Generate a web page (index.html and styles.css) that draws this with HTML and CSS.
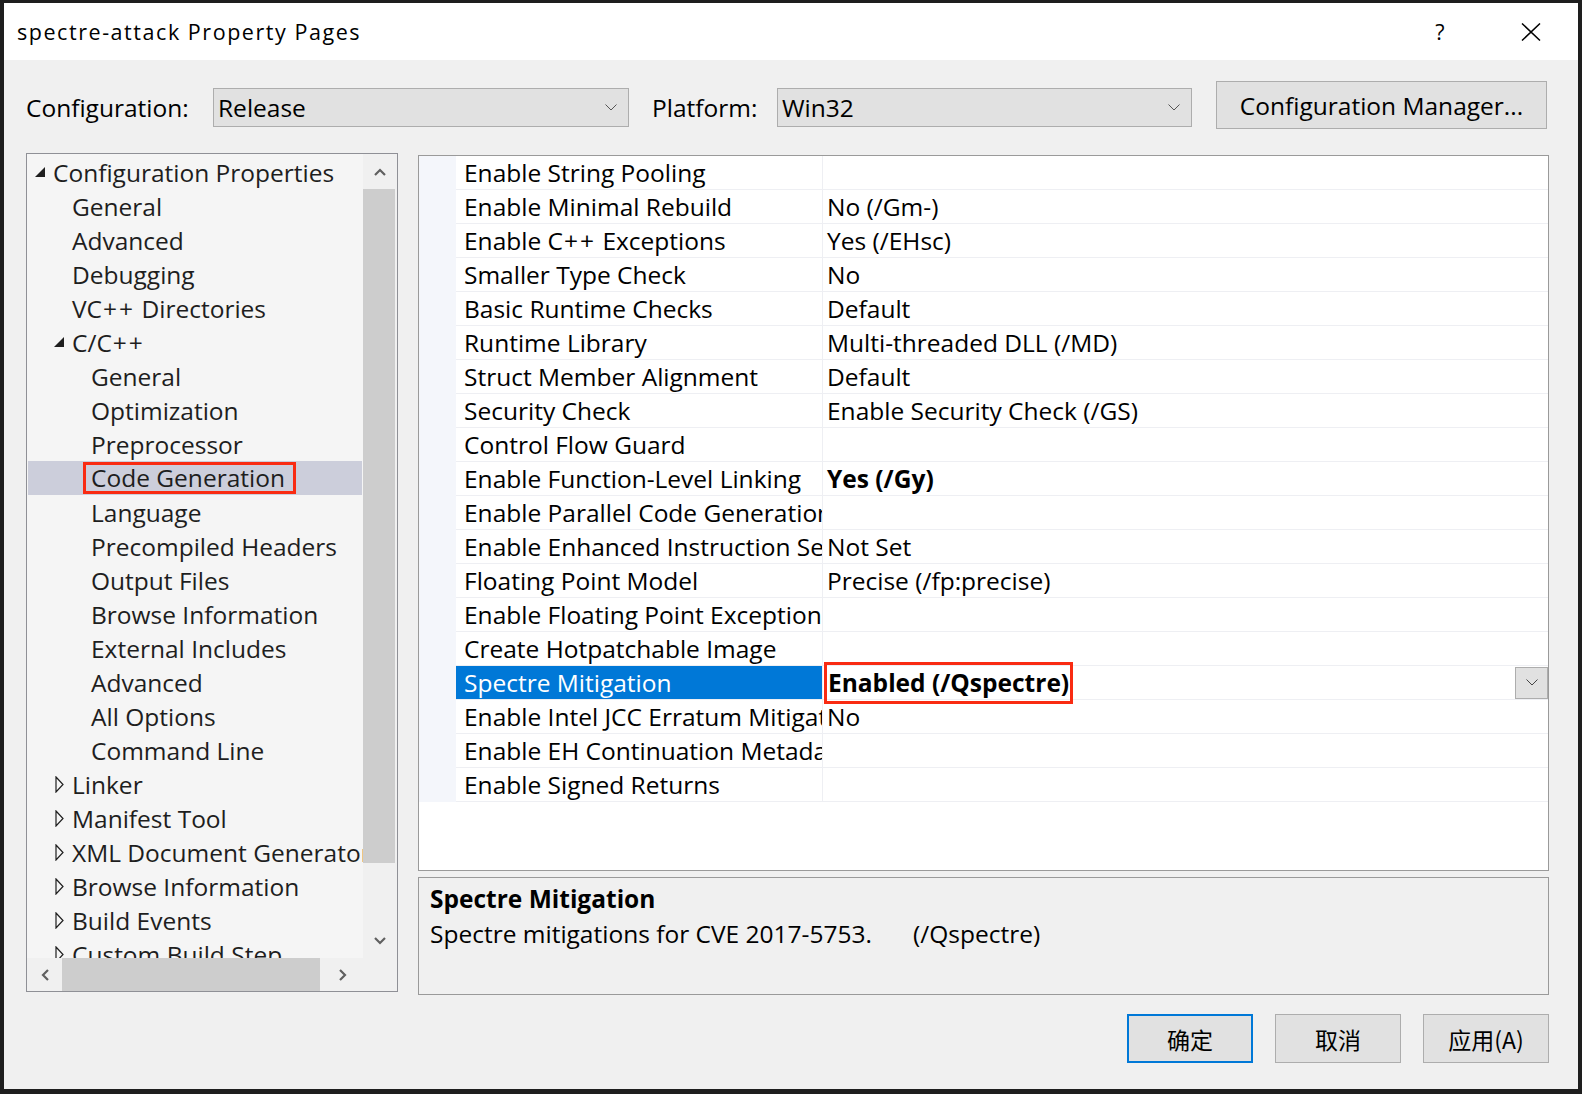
FILE: index.html
```html
<!DOCTYPE html>
<html>
<head>
<meta charset="utf-8">
<title>spectre-attack Property Pages</title>
<link rel="stylesheet" href="styles.css">
</head>
<body>
<div class="dialog">
  <div class="titlebar">
    <span class="title">spectre-attack Property Pages</span>
    <span class="help">?</span>
    <svg class="close" width="20" height="18" viewBox="0 0 20 18"><path d="M1 0.5 L19 17.5 M19 0.5 L1 17.5" stroke="#000" stroke-width="1.5" fill="none"/></svg>
  </div>
  <div class="content">
    <div class="config-row">
      <span class="lbl lbl-config">Configuration:</span>
      <div class="combo combo-config"><span>Release</span><svg class="chev" width="12" height="7" viewBox="0 0 12 7"><path d="M0.5 0.5 L6 6 L11.5 0.5" stroke="#555" stroke-width="1" fill="none"/></svg></div>
      <span class="lbl lbl-platform">Platform:</span>
      <div class="combo combo-platform"><span>Win32</span><svg class="chev" width="12" height="7" viewBox="0 0 12 7"><path d="M0.5 0.5 L6 6 L11.5 0.5" stroke="#555" stroke-width="1" fill="none"/></svg></div>
      <button class="btn btn-cfgmgr">Configuration Manager...</button>
    </div>
    <div class="main">
      <div class="tree">
        <div class="tree-body">
          <div class="tree-rows">
            <div class="node l0"><span class="tg"><svg width="10" height="10" viewBox="0 0 10 10"><path d="M10 0 L10 10 L0 10 Z" fill="#1e1e1e"/></svg></span><span>Configuration Properties</span></div>
            <div class="node l1"><span class="tg"></span><span>General</span></div>
            <div class="node l1"><span class="tg"></span><span>Advanced</span></div>
            <div class="node l1"><span class="tg"></span><span>Debugging</span></div>
            <div class="node l1"><span class="tg"></span><span>VC<span class="pp">++</span> Directories</span></div>
            <div class="node l1"><span class="tg"><svg width="10" height="10" viewBox="0 0 10 10"><path d="M10 0 L10 10 L0 10 Z" fill="#1e1e1e"/></svg></span><span>C/C<span class="pp">++</span></span></div>
            <div class="node l2"><span class="tg"></span><span>General</span></div>
            <div class="node l2"><span class="tg"></span><span>Optimization</span></div>
            <div class="node l2"><span class="tg"></span><span>Preprocessor</span></div>
            <div class="node l2 sel"><span class="tg"></span><span class="hl">Code Generation</span></div>
            <div class="node l2"><span class="tg"></span><span>Language</span></div>
            <div class="node l2"><span class="tg"></span><span>Precompiled Headers</span></div>
            <div class="node l2"><span class="tg"></span><span>Output Files</span></div>
            <div class="node l2"><span class="tg"></span><span>Browse Information</span></div>
            <div class="node l2"><span class="tg"></span><span>External Includes</span></div>
            <div class="node l2"><span class="tg"></span><span>Advanced</span></div>
            <div class="node l2"><span class="tg"></span><span>All Options</span></div>
            <div class="node l2"><span class="tg"></span><span>Command Line</span></div>
            <div class="node l1"><span class="tg"><svg width="9" height="17" viewBox="0 0 9 17"><path d="M1 1 L8 8.5 L1 16 Z" fill="none" stroke="#1e1e1e" stroke-width="1.2"/></svg></span><span>Linker</span></div>
            <div class="node l1"><span class="tg"><svg width="9" height="17" viewBox="0 0 9 17"><path d="M1 1 L8 8.5 L1 16 Z" fill="none" stroke="#1e1e1e" stroke-width="1.2"/></svg></span><span>Manifest Tool</span></div>
            <div class="node l1"><span class="tg"><svg width="9" height="17" viewBox="0 0 9 17"><path d="M1 1 L8 8.5 L1 16 Z" fill="none" stroke="#1e1e1e" stroke-width="1.2"/></svg></span><span>XML Document Generator</span></div>
            <div class="node l1"><span class="tg"><svg width="9" height="17" viewBox="0 0 9 17"><path d="M1 1 L8 8.5 L1 16 Z" fill="none" stroke="#1e1e1e" stroke-width="1.2"/></svg></span><span>Browse Information</span></div>
            <div class="node l1"><span class="tg"><svg width="9" height="17" viewBox="0 0 9 17"><path d="M1 1 L8 8.5 L1 16 Z" fill="none" stroke="#1e1e1e" stroke-width="1.2"/></svg></span><span>Build Events</span></div>
            <div class="node l1"><span class="tg"><svg width="9" height="17" viewBox="0 0 9 17"><path d="M1 1 L8 8.5 L1 16 Z" fill="none" stroke="#1e1e1e" stroke-width="1.2"/></svg></span><span>Custom Build Step</span></div>
          </div>
          <div class="vscroll">
            <div class="sb-btn"><svg width="12" height="8" viewBox="0 0 12 8"><path d="M1 7 L6 2 L11 7" fill="none" stroke="#606060" stroke-width="2.2"/></svg></div>
            <div class="vs-thumb"></div>
            <div class="vs-space"></div>
            <div class="sb-btn"><svg width="12" height="8" viewBox="0 0 12 8"><path d="M1 1 L6 6 L11 1" fill="none" stroke="#606060" stroke-width="2.2"/></svg></div>
          </div>
        </div>
        <div class="hscroll-row">
          <div class="hscroll">
            <div class="hs-btn hs-left"><svg width="8" height="12" viewBox="0 0 8 12"><path d="M7 1 L2 6 L7 11" fill="none" stroke="#606060" stroke-width="2.2"/></svg></div>
            <div class="hs-thumb"></div>
            <div class="hs-btn hs-right"><svg width="8" height="12" viewBox="0 0 8 12"><path d="M1 1 L6 6 L1 11" fill="none" stroke="#606060" stroke-width="2.2"/></svg></div>
          </div>
          <div class="corner"></div>
        </div>
      </div>
      <div class="right">
        <div class="grid">
          <div class="row"><div class="m"></div><div class="cells"><div class="name">Enable String Pooling</div><div class="val"></div></div></div>
          <div class="row"><div class="m"></div><div class="cells"><div class="name">Enable Minimal Rebuild</div><div class="val">No (/Gm-)</div></div></div>
          <div class="row"><div class="m"></div><div class="cells"><div class="name">Enable C<span class="pp">++</span> Exceptions</div><div class="val">Yes (/EHsc)</div></div></div>
          <div class="row"><div class="m"></div><div class="cells"><div class="name">Smaller Type Check</div><div class="val">No</div></div></div>
          <div class="row"><div class="m"></div><div class="cells"><div class="name">Basic Runtime Checks</div><div class="val">Default</div></div></div>
          <div class="row"><div class="m"></div><div class="cells"><div class="name">Runtime Library</div><div class="val">Multi-threaded DLL (/MD)</div></div></div>
          <div class="row"><div class="m"></div><div class="cells"><div class="name">Struct Member Alignment</div><div class="val">Default</div></div></div>
          <div class="row"><div class="m"></div><div class="cells"><div class="name">Security Check</div><div class="val">Enable Security Check (/GS)</div></div></div>
          <div class="row"><div class="m"></div><div class="cells"><div class="name">Control Flow Guard</div><div class="val"></div></div></div>
          <div class="row"><div class="m"></div><div class="cells"><div class="name">Enable Function-Level Linking</div><div class="val bold">Yes (/Gy)</div></div></div>
          <div class="row"><div class="m"></div><div class="cells"><div class="name">Enable Parallel Code Generation</div><div class="val"></div></div></div>
          <div class="row"><div class="m"></div><div class="cells"><div class="name">Enable Enhanced Instruction Set</div><div class="val">Not Set</div></div></div>
          <div class="row"><div class="m"></div><div class="cells"><div class="name">Floating Point Model</div><div class="val">Precise (/fp:precise)</div></div></div>
          <div class="row"><div class="m"></div><div class="cells"><div class="name">Enable Floating Point Exceptions</div><div class="val"></div></div></div>
          <div class="row"><div class="m"></div><div class="cells"><div class="name">Create Hotpatchable Image</div><div class="val"></div></div></div>
          <div class="row"><div class="m"></div><div class="cells"><div class="name sel">Spectre Mitigation</div><div class="val"><span class="hlv">Enabled (/Qspectre)</span><span class="dd"><svg width="12" height="7" viewBox="0 0 12 7"><path d="M0.5 0.5 L6 6 L11.5 0.5" stroke="#444" stroke-width="1" fill="none"/></svg></span></div></div></div>
          <div class="row"><div class="m"></div><div class="cells"><div class="name">Enable Intel JCC Erratum Mitigation</div><div class="val">No</div></div></div>
          <div class="row"><div class="m"></div><div class="cells"><div class="name">Enable EH Continuation Metadata</div><div class="val"></div></div></div>
          <div class="row"><div class="m"></div><div class="cells"><div class="name">Enable Signed Returns</div><div class="val"></div></div></div>
        </div>
        <div class="desc">
          <div class="desc-title">Spectre Mitigation</div>
          <div>Spectre mitigations for CVE 2017-5753.<span class="switch">(/Qspectre)</span></div>
        </div>
      </div>
    </div>
    <div class="buttons">
      <button class="dbtn def">确定</button>
      <button class="dbtn">取消</button>
      <button class="dbtn">应用(A)</button>
    </div>
  </div>
</div>
</body>
</html>
```
FILE: styles.css
```css
* { box-sizing: border-box; }
html, body { margin: 0; padding: 0; }
body {
  width: 1582px;
  height: 1094px;
  background: #1e1e1e;
  overflow: hidden;
  font-family: "Open Sans", "Noto Sans", sans-serif;
  color: #000;
}
.dialog {
  margin: 3px 4px 0 4px;
  width: 1574px;
  height: 1086px;
  background: #f0f0f0;
  display: flex;
  flex-direction: column;
}
.titlebar {
  height: 57px;
  flex: none;
  background: #fff;
  display: flex;
  align-items: center;
  padding-left: 13px;
}
.title {
  flex: 1;
  font-size: 21.5px;
  letter-spacing: 1.55px;
}
.help {
  width: 20px;
  text-align: center;
  font-size: 21.5px;
  margin-right: 71px;
}
.close { margin-right: 37px; flex: none; }

.content {
  flex: 1;
  padding: 21px 29px 26px 22px;
  display: flex;
  flex-direction: column;
}
.config-row {
  height: 48px;
  flex: none;
  display: flex;
  align-items: flex-start;
}
.lbl {
  font-size: 24.5px;
  height: 39px;
  line-height: 39px;
  margin-top: 7px;
  white-space: nowrap;
}
.lbl-config { width: 187px; padding-left: 0; }
.lbl-platform { width: 148px; padding-left: 23px; }
.combo {
  margin-top: 7px;
  height: 39px;
  border: 1px solid #adadad;
  background: #e1e1e1;
  display: flex;
  align-items: center;
  padding-left: 4px;
  font-size: 24.5px;
  line-height: 37px;
}
.combo-config { width: 416px; }
.combo-platform { width: 415px; }
.combo .chev { margin-left: auto; margin-right: 11px; }
.btn {
  border: 1px solid #adadad;
  background: #e1e1e1;
  font-family: inherit;
  font-size: 24.5px;
  color: #000;
  padding: 0;
}
.btn-cfgmgr { margin-left: 24px; width: 331px; height: 48px; }

.pp { letter-spacing: 2px; margin-left: 1px; }

.main {
  margin-top: 24px;
  height: 842px;
  flex: none;
  display: flex;
  align-items: flex-start;
}
.tree {
  width: 372px;
  height: 839px;
  border: 1px solid #8f9096;
  background: #f5f5f5;
  display: flex;
  flex-direction: column;
}
.tree-body { display: flex; height: 804px; }
.tree-rows {
  width: 336px;
  overflow: hidden;
  padding-top: 1px;
}
.node {
  height: 34px;
  display: flex;
  align-items: center;
  white-space: nowrap;
  font-size: 24.5px;
  color: #1e1e1e;
}
.node .tg {
  width: 26px;
  flex: none;
  display: flex;
  justify-content: flex-end;
  align-items: center;
  padding-right: 8px;
}
.l1 { padding-left: 19px; }
.l2 { padding-left: 38px; }
.node.sel {
  background: #cccedb;
  margin: 0 1px;
  padding-left: 37px;
}
.hl {
  display: inline-block;
  height: 32px;
  line-height: 26px;
  border: 3px solid #f92b12;
  padding: 0 8px 0 5px;
  margin-left: -8px;
}
.vscroll {
  width: 34px;
  background: #f0f0f0;
  display: flex;
  flex-direction: column;
}
.sb-btn {
  height: 35px;
  flex: none;
  display: flex;
  align-items: center;
  justify-content: center;
}
.vs-thumb {
  height: 674px;
  flex: none;
  background: #cdcdcd;
  margin-right: 2px;
}
.vs-space { flex: 1; }
.hscroll-row { display: flex; height: 33px; }
.hscroll {
  width: 336px;
  background: #f0f0f0;
  display: flex;
}
.hs-btn {
  display: flex;
  align-items: center;
  justify-content: center;
}
.hs-left { width: 35px; }
.hs-thumb { width: 258px; background: #cdcdcd; }
.hs-right { flex: 1; padding-left: 2px; }
.corner { width: 34px; background: #f0f0f0; }

.right {
  margin-left: 20px;
  width: 1131px;
  display: flex;
  flex-direction: column;
}
.grid {
  margin-top: 2px;
  height: 716px;
  border: 1px solid #9a9a9a;
  background: #fff;
}
.row { display: flex; height: 34px; }
.row .m { width: 37px; flex: none; background: #f4f6fb; }
.cells {
  flex: 1;
  display: flex;
  border-bottom: 1px solid #eeeff3;
}
.name {
  width: 367px;
  flex: none;
  padding-left: 8px;
  overflow: hidden;
  white-space: nowrap;
  border-right: 1px solid #eeeff3;
  font-size: 24.5px;
  line-height: 34px;
}
.name.sel { background: #0078d7; color: #fff; }
.val {
  flex: 1;
  padding-left: 4px;
  display: flex;
  align-items: center;
  white-space: nowrap;
  font-size: 24.5px;
}
.val.bold { font-weight: bold; }
.hlv {
  display: inline-block;
  height: 42px;
  line-height: 36px;
  border: 3px solid #f92b12;
  padding: 0 1px 0 1px;
  margin-left: -3px;
  font-weight: bold;
}
.dd {
  margin-left: auto;
  width: 33px;
  height: 32px;
  border: 1px solid #adadad;
  background: #e1e1e1;
  display: flex;
  align-items: center;
  justify-content: center;
}
.desc {
  margin-top: 6px;
  height: 118px;
  border: 1px solid #9a9a9a;
  background: #f0f0f0;
  padding: 3px 11px;
  font-size: 24.5px;
  line-height: 35px;
  white-space: nowrap;
}
.desc-title { font-weight: bold; }
.switch { margin-left: 41px; }

.buttons {
  margin-top: 19px;
  display: flex;
  justify-content: flex-end;
  gap: 22px;
}
.dbtn {
  width: 126px;
  height: 49px;
  border: 1px solid #adadad;
  background: #e1e1e1;
  font-family: "Noto Sans CJK SC", sans-serif;
  font-size: 23px;
  color: #000;
  padding: 0;
}
.dbtn.def { border: 2px solid #0078d7; }
```
